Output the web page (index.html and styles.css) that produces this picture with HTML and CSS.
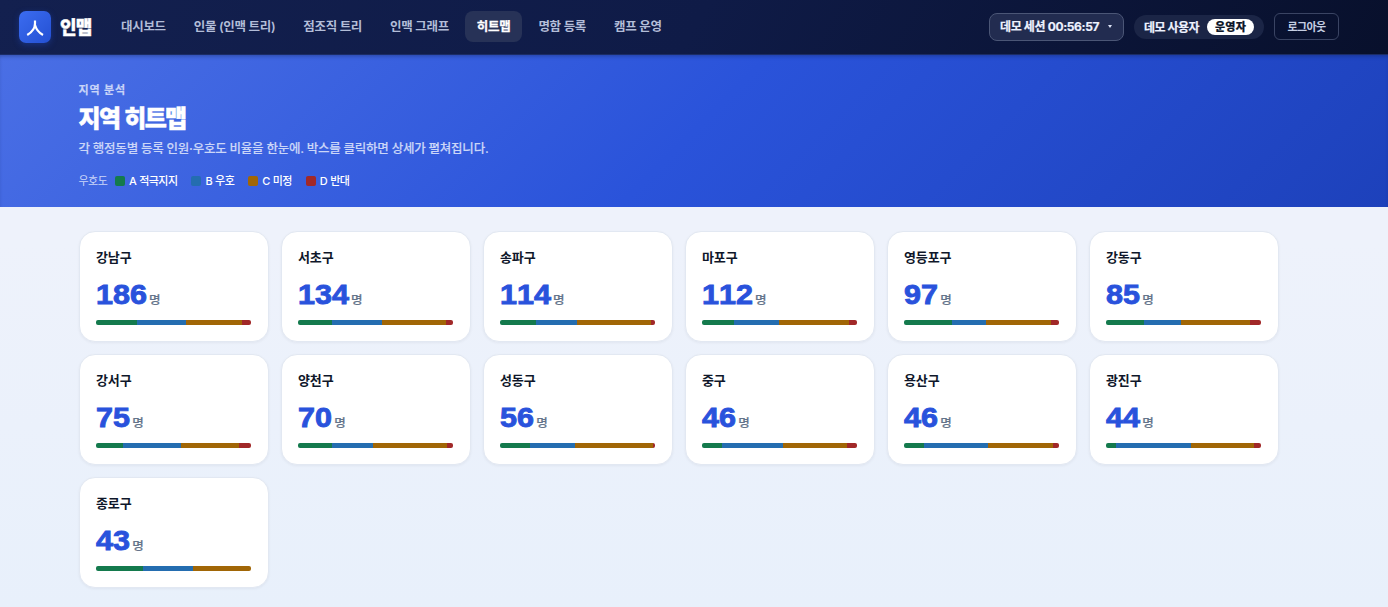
FILE: index.html
```html
<!DOCTYPE html>
<html lang="ko">
<head>
<meta charset="utf-8">
<title>지역 히트맵 - 인맵</title>
<link rel="stylesheet" href="styles.css">
</head>
<body>

<header class="topbar">
  <div class="topbar-inner">
    <a class="brand" href="#">
      <span class="brand-mark">
        <svg width="32" height="32" viewBox="0 0 32 32" fill="none" stroke="#fff" stroke-width="2.2"><path d="M16 9.500v3c0 4.500-2.700 8.500-7.800 11.500M16 14c1.200 4.200 3.600 7.600 8 10"/></svg>
      </span>
      <span class="brand-name">인맵</span>
    </a>
    <nav class="nav">
      <a href="#">대시보드</a>
      <a href="#">인물 (인맥 트리)</a>
      <a href="#">점조직 트리</a>
      <a href="#">인맥 그래프</a>
      <a href="#" class="active">히트맵</a>
      <a href="#">명함 등록</a>
      <a href="#">캠프 운영</a>
    </nav>
    <div class="account">
      <button class="session">데모 세션 00:56:57 <i class="caret"></i></button>
      <span class="user">데모 사용자 <b class="role">운영자</b></span>
      <button class="logout">로그아웃</button>
    </div>
  </div>
</header>

<section class="hero">
  <div class="hero-inner">
    <div class="eyebrow">지역 분석</div>
    <h1>지역 히트맵</h1>
    <p class="desc">각 행정동별 등록 인원·우호도 비율을 한눈에. 박스를 클릭하면 상세가 펼쳐집니다.</p>
    <div class="legend">
      <span class="legend-title">우호도</span>
      <span class="legend-item"><i class="a"></i>A 적극지지</span>
      <span class="legend-item"><i class="b"></i>B 우호</span>
      <span class="legend-item"><i class="c"></i>C 미정</span>
      <span class="legend-item"><i class="d"></i>D 반대</span>
    </div>
  </div>
</section>

<main class="grid">
  <article class="card">
    <h2>강남구</h2>
    <div class="count"><strong>186</strong><span>명</span></div>
    <div class="bar"><i class="a" style="width:26.5%"></i><i class="b" style="width:31.6%"></i><i class="c" style="width:36.1%"></i><i class="d" style="width:5.8%"></i></div>
  </article>
  <article class="card">
    <h2>서초구</h2>
    <div class="count"><strong>134</strong><span>명</span></div>
    <div class="bar"><i class="a" style="width:21.9%"></i><i class="b" style="width:32.3%"></i><i class="c" style="width:41.3%"></i><i class="d" style="width:4.5%"></i></div>
  </article>
  <article class="card">
    <h2>송파구</h2>
    <div class="count"><strong>114</strong><span>명</span></div>
    <div class="bar"><i class="a" style="width:23.2%"></i><i class="b" style="width:26.5%"></i><i class="c" style="width:47.7%"></i><i class="d" style="width:2.6%"></i></div>
  </article>
  <article class="card">
    <h2>마포구</h2>
    <div class="count"><strong>112</strong><span>명</span></div>
    <div class="bar"><i class="a" style="width:20.9%"></i><i class="b" style="width:28.8%"></i><i class="c" style="width:45.2%"></i><i class="d" style="width:5.1%"></i></div>
  </article>
  <article class="card">
    <h2>영등포구</h2>
    <div class="count"><strong>97</strong><span>명</span></div>
    <div class="bar"><i class="a" style="width:31%"></i><i class="b" style="width:21.9%"></i><i class="c" style="width:41.9%"></i><i class="d" style="width:5.2%"></i></div>
  </article>
  <article class="card">
    <h2>강동구</h2>
    <div class="count"><strong>85</strong><span>명</span></div>
    <div class="bar"><i class="a" style="width:24.5%"></i><i class="b" style="width:23.9%"></i><i class="c" style="width:44.5%"></i><i class="d" style="width:7.1%"></i></div>
  </article>
  <article class="card">
    <h2>강서구</h2>
    <div class="count"><strong>75</strong><span>명</span></div>
    <div class="bar"><i class="a" style="width:17.4%"></i><i class="b" style="width:37.4%"></i><i class="c" style="width:37.4%"></i><i class="d" style="width:7.8%"></i></div>
  </article>
  <article class="card">
    <h2>양천구</h2>
    <div class="count"><strong>70</strong><span>명</span></div>
    <div class="bar"><i class="a" style="width:21.7%"></i><i class="b" style="width:26.7%"></i><i class="c" style="width:47.7%"></i><i class="d" style="width:3.9%"></i></div>
  </article>
  <article class="card">
    <h2>성동구</h2>
    <div class="count"><strong>56</strong><span>명</span></div>
    <div class="bar"><i class="a" style="width:19.4%"></i><i class="b" style="width:29%"></i><i class="c" style="width:50.3%"></i><i class="d" style="width:1.3%"></i></div>
  </article>
  <article class="card">
    <h2>중구</h2>
    <div class="count"><strong>46</strong><span>명</span></div>
    <div class="bar"><i class="a" style="width:12.9%"></i><i class="b" style="width:39.5%"></i><i class="c" style="width:41.2%"></i><i class="d" style="width:6.4%"></i></div>
  </article>
  <article class="card">
    <h2>용산구</h2>
    <div class="count"><strong>46</strong><span>명</span></div>
    <div class="bar"><i class="a" style="width:12.9%"></i><i class="b" style="width:41.3%"></i><i class="c" style="width:41.9%"></i><i class="d" style="width:3.9%"></i></div>
  </article>
  <article class="card">
    <h2>광진구</h2>
    <div class="count"><strong>44</strong><span>명</span></div>
    <div class="bar"><i class="a" style="width:6.5%"></i><i class="b" style="width:48.4%"></i><i class="c" style="width:40.6%"></i><i class="d" style="width:4.5%"></i></div>
  </article>
  <article class="card">
    <h2>종로구</h2>
    <div class="count"><strong>43</strong><span>명</span></div>
    <div class="bar"><i class="a" style="width:30.3%"></i><i class="b" style="width:32.3%"></i><i class="c" style="width:37.4%"></i></div>
  </article>
</main>

</body>
</html>
```
FILE: styles.css
```css
* {
  box-sizing: border-box;
}

body {
  margin: 0;
  min-height: 607px;
  background: linear-gradient(180deg, #eef2fb 0%, #eef2fb 40%, #e8f0fb 100%);
  color: #0f172a;
  font-family: Inter, "Noto Sans CJK KR", sans-serif;
  font-size: 13px;
  overflow: hidden;
}

a {
  color: inherit;
  text-decoration: none;
}

button {
  font: inherit;
  color: inherit;
}

/* top bar */
.topbar {
  height: 55px;
  background: linear-gradient(120deg, #13204f 0%, #0f1b47 50%, #08102c 100%);
  border-bottom: 1px solid #1b2c66;
}

.topbar-inner {
  display: flex;
  align-items: center;
  width: 1320px;
  height: 53px;
  margin-left: 19px;
}

.brand {
  display: flex;
  align-items: center;
  gap: 9px;
  width: 90px;
}

.brand-mark {
  width: 32px;
  height: 32px;
  border-radius: 7px;
  background: linear-gradient(135deg, #3b6cf0, #2450d3);
  box-shadow: 0 2px 6px rgba(37, 84, 220, 0.35);
}

.brand-mark svg {
  display: block;
}

.brand-name {
  padding-bottom: 2px;
  color: #fff;
  font-size: 18px;
  font-weight: 900;
  letter-spacing: -0.05em;
  -webkit-text-stroke: 0.4px;
}

.nav {
  display: flex;
  gap: 4px;
  color: #b3bdd8;
  font-size: 12.5px;
  font-weight: 600;
  letter-spacing: -0.025em;
  white-space: nowrap;
}

.nav a {
  padding: 0 12px;
  line-height: 31px;
  border-radius: 8px;
}

.nav .active {
  background: #273257;
  color: #fff;
  font-weight: 700;
  -webkit-text-stroke: 0.3px;
}

.account {
  display: flex;
  align-items: center;
  gap: 10px;
  margin-left: auto;
  color: #eef2ff;
  font-weight: 700;
  font-size: 12px;
  letter-spacing: -0.04em;
  white-space: nowrap;
}

.session {
  display: flex;
  align-items: center;
  justify-content: space-between;
  width: 135px;
  height: 28px;
  padding: 0 11px 2px 10px;
  border: 1px solid #4b5676;
  border-radius: 8px;
  background: #222c50;
  letter-spacing: -0.03em;
  -webkit-text-stroke: 0.2px;
}

.caret {
  margin-top: 2px;
  border: 2.5px solid transparent;
  border-top: 3px solid #dbe2f5;
  border-bottom: 0;
}

.user {
  display: flex;
  align-items: center;
  justify-content: space-between;
  width: 130px;
  height: 24px;
  padding: 0 10px 1px;
  border-radius: 12px;
  background: #1b2546;
  -webkit-text-stroke: 0.2px;
}

.role {
  width: 47px;
  margin-top: 1px;
  border-radius: 8px;
  background: #fff;
  color: #0f172a;
  font-size: 11px;
  line-height: 16px;
  text-align: center;
  letter-spacing: 0.02em;
}

.logout {
  width: 65px;
  height: 27px;
  padding: 0 0 1px;
  border: 1px solid #3a4463;
  border-radius: 6px;
  background: none;
  color: #c5cde2;
  font-size: 11px;
  font-weight: 600;
  letter-spacing: -0.06em;
}

/* page heading */
.hero {
  height: 152px;
  padding-top: 27px;
  background: linear-gradient(135deg, #4a6fe5 0%, #2a53da 50%, #1d41bb 100%);
  box-shadow: inset 0 3px 4px -2px rgba(15, 27, 71, 0.4);
  color: #fff;
}

.hero-inner {
  width: 1200px;
  margin-left: 78.5px;
}

.eyebrow {
  color: #c8d4f8;
  font-size: 11px;
  font-weight: 700;
  line-height: 16px;
  letter-spacing: 0.08em;
  -webkit-text-stroke: 0.2px;
}

.hero h1 {
  margin: 5px 0 0;
  font-size: 24px;
  font-weight: 900;
  line-height: 32px;
  letter-spacing: -0.07em;
  word-spacing: 0.08em;
  -webkit-text-stroke: 0.5px;
}

.desc {
  margin: 5px 0 0;
  color: #cbd6f8;
  font-size: 12.5px;
  font-weight: 500;
  line-height: 18px;
  letter-spacing: -0.24px;
  -webkit-text-stroke: 0.15px;
}

.legend {
  display: flex;
  align-items: center;
  margin-top: 14px;
  font-size: 11px;
  line-height: 18px;
  letter-spacing: -0.05em;
  word-spacing: 0.05em;
  white-space: nowrap;
}

.legend-title {
  width: 36.5px;
  color: #cbd6f8;
}

.legend-item {
  display: flex;
  align-items: center;
  gap: 4px;
  margin-right: 14px;
  font-weight: 500;
}

.legend-item i {
  width: 10px;
  height: 10px;
  border-radius: 2px;
}

.a { background: #147a4d; }
.b { background: #246db0; }
.c { background: #a16606; }
.d { background: #a12828; }

/* district cards */
.grid {
  display: grid;
  grid-template-columns: repeat(6, 190px);
  gap: 12px;
  margin: 24px 0 0 79px;
}

.card {
  height: 111px;
  padding: 15px 17px 16px 16px;
  border: 1px solid #e2e8f2;
  border-radius: 16px;
  background: #fff;
  box-shadow: 0 1px 3px rgba(15, 23, 42, 0.05);
}

.card h2 {
  margin: 0;
  font-size: 13px;
  font-weight: 700;
  line-height: 20px;
  letter-spacing: -0.01em;
}

/* wide numerals */
.count {
  display: flex;
  align-items: baseline;
  gap: 2px;
  margin-top: 11px;
  height: 34px;
  line-height: 34px;
  transform: scaleX(1.09);
  transform-origin: left;
}

.count strong {
  color: #2952dc;
  font-family: "Liberation Sans", Arial, sans-serif;
  font-size: 28px;
  font-weight: 800;
  font-kerning: none;
  -webkit-text-stroke: 0.9px;
}

.count span {
  color: #64748b;
  font-size: 11.5px;
  font-weight: 500;
  -webkit-text-stroke: 0.2px;
}

.bar {
  display: flex;
  height: 5px;
  margin-top: 8px;
  border-radius: 2px;
  overflow: hidden;
}
```
